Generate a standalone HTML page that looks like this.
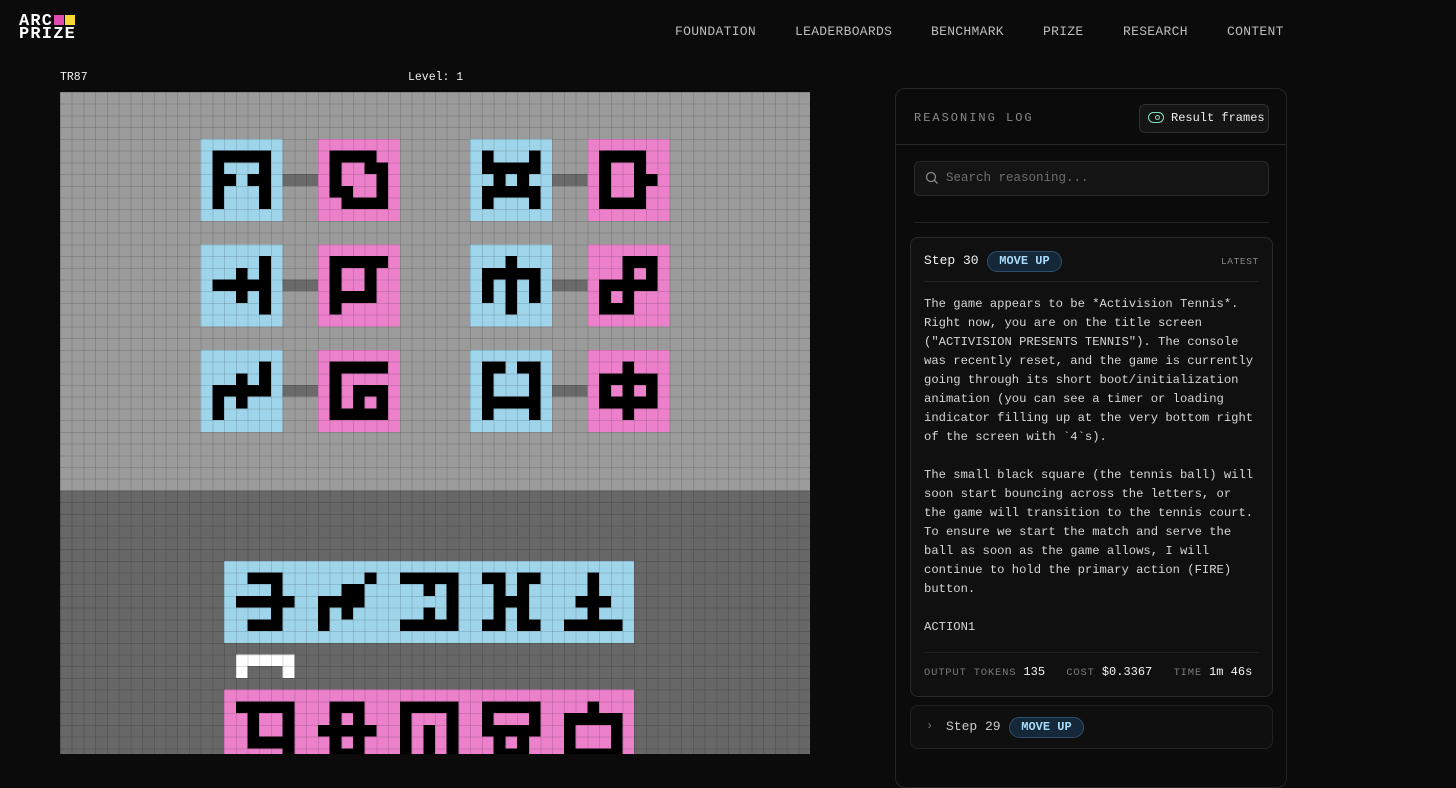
<!DOCTYPE html>
<html><head><meta charset="utf-8">
<style>
*{margin:0;padding:0;box-sizing:border-box}
body{width:1456px;height:754px;overflow:hidden;background:#0c0b0c;font-family:"Liberation Mono",monospace;color:#ddd;position:relative}
.abs{position:absolute}
.nav{top:24px;font-size:13px;color:#bdbdbd;letter-spacing:0.3px}
#board{left:60px;top:92px;width:750px;height:662px;overflow:hidden;background:#9b9b9b}
.panel{left:895px;top:88px;width:392px;height:700px;border:1px solid #262626;border-radius:10px;background:#0b0b0b}
.t{font-size:12.2px;line-height:19px;color:#d6d6d6;white-space:pre}
.badge{background:#15283a;border:1px solid #2e4f6c;border-radius:11px;color:#a8dcf8;font-weight:bold;font-size:12px;text-align:center}
</style></head><body>
<div class="abs" style="left:19px;top:15px;font-size:17px;font-weight:bold;color:#fff;line-height:13px;letter-spacing:1.2px;font-family:'Liberation Mono',monospace">ARC<span style="display:inline-block;width:10px;height:10px;background:#e04bb0;margin-left:1px"></span><span style="display:inline-block;width:10px;height:10px;background:#f7d63a;margin-left:1px"></span><br>PRIZE</div>
<div class="abs nav" style="left:675px">FOUNDATION</div>
<div class="abs nav" style="left:795px">LEADERBOARDS</div>
<div class="abs nav" style="left:931px">BENCHMARK</div>
<div class="abs nav" style="left:1043px">PRIZE</div>
<div class="abs nav" style="left:1123px">RESEARCH</div>
<div class="abs nav" style="left:1227px">CONTENT</div>
<div class="abs" style="left:60px;top:71px;font-size:11.5px;color:#eee">TR87</div>
<div class="abs" style="left:408px;top:71px;font-size:11.5px;color:#eee">Level: 1</div>
<div class="abs" id="board"></div>

<div class="abs panel"></div>
<div class="abs" style="left:914px;top:111px;font-size:12px;letter-spacing:2px;color:#8a8a8a">REASONING LOG</div>
<div class="abs" style="left:1139px;top:104px;width:130px;height:29px;border:1px solid #2e2e2e;border-radius:6px;background:#151515"></div>
<div class="abs" style="left:1148px;top:112px;width:16px;height:11px;border:1.5px solid #7fe0b8;border-radius:6px"><div style="position:absolute;left:6px;top:2px;width:5px;height:5px;border:1.2px solid #7fe0b8;border-radius:50%"></div></div>
<div class="abs" style="left:1171px;top:111px;font-size:12px;color:#eee">Result frames</div>
<div class="abs" style="left:895px;top:144px;width:392px;height:1px;background:#262626"></div>
<div class="abs" style="left:914px;top:161px;width:355px;height:35px;border:1px solid #2a2a2a;border-radius:6px;background:#141414"></div>
<svg class="abs" style="left:925px;top:171px" width="14" height="14" viewBox="0 0 14 14"><circle cx="6" cy="6" r="4.5" fill="none" stroke="#888" stroke-width="1.3"/><line x1="9.3" y1="9.3" x2="12.5" y2="12.5" stroke="#888" stroke-width="1.3"/></svg>
<div class="abs" style="left:946px;top:171px;font-size:12.5px;color:#6e6e6e">Search reasoning...</div>
<div class="abs" style="left:914px;top:222px;width:355px;height:1px;background:#222"></div>

<div class="abs" style="left:910px;top:237px;width:363px;height:460px;border:1px solid #2a2a2a;border-radius:8px;background:#101010"></div>
<div class="abs" style="left:924px;top:253px;font-size:13px;color:#f2f2f2">Step 30</div>
<div class="abs badge" style="left:987px;top:251px;width:75px;height:21px;line-height:19px">MOVE UP</div>
<div class="abs" style="left:1221px;top:256px;font-size:9.5px;letter-spacing:0.6px;color:#888">LATEST</div>
<div class="abs" style="left:924px;top:281px;width:335px;height:1px;background:#222"></div>
<div class="abs t" style="left:924px;top:295px">The game appears to be *Activision Tennis*.
Right now, you are on the title screen
("ACTIVISION PRESENTS TENNIS"). The console
was recently reset, and the game is currently
going through its short boot/initialization
animation (you can see a timer or loading
indicator filling up at the very bottom right
of the screen with `4`s).

The small black square (the tennis ball) will
soon start bouncing across the letters, or
the game will transition to the tennis court.
To ensure we start the match and serve the
ball as soon as the game allows, I will
continue to hold the primary action (FIRE)
button.

ACTION1</div>
<div class="abs" style="left:924px;top:652px;width:335px;height:1px;background:#1f1f1f"></div>
<div class="abs" style="left:924px;top:665px;font-size:10.5px;letter-spacing:0.8px;color:#7a7a7a;white-space:pre">OUTPUT TOKENS <span style="color:#f2f2f2;font-size:12px;letter-spacing:0">135</span>   COST <span style="color:#f2f2f2;font-size:12px;letter-spacing:0">$0.3367</span>   TIME <span style="color:#f2f2f2;font-size:12px;letter-spacing:0">1m 46s</span></div>

<div class="abs" style="left:910px;top:705px;width:363px;height:44px;border:1px solid #222;border-radius:8px;background:#0f0f0f"></div>
<div class="abs" style="left:926px;top:719px;font-size:12px;color:#777">›</div>
<div class="abs" style="left:946px;top:719px;font-size:13px;color:#ccc">Step 29</div>
<div class="abs badge" style="left:1009px;top:717px;width:75px;height:21px;line-height:19px">MOVE UP</div>

<script>
(function(){
var C=750/64,N=64,R=57;
var g=[];for(var r=0;r<R;r++){g[r]=[];for(var c=0;c<N;c++)g[r][c]=r<34?'#9b9b9b':'#676767';}
function rect(r0,c0,h,w,col){for(var r=r0;r<r0+h;r++)for(var c=c0;c<c0+w;c++)if(r<R)g[r][c]=col;}
function glyph(r0,c0,p){for(var i=0;i<5;i++)for(var j=0;j<5;j++)if(p[i][j]=='X'&&r0+i<R)g[r0+i][c0+j]='#000';}
var B='#9fd5ea',P='#ec80cb',K='#6a6a6a';
function pair(r,cb,cp,gb,gp){rect(r,cb,7,7,B);rect(r,cp,7,7,P);rect(r+3,cb+7,1,cp-cb-7,K);glyph(r+1,cb+1,gb);glyph(r+1,cp+1,gp);}
pair(4,12,22,["XXXXX","X...X","XX.XX","X...X","X...X"],["XXXX.","X..XX","X...X","XX..X",".XXXX"]);
pair(4,35,45,["X...X","XXXXX",".X.X.","XXXXX","X...X"],["XXXX.","X..X.","X..XX","X..X.","XXXX."]);
pair(13,12,22,["....X","..X.X","XXXXX","..X.X","....X"],["XXXXX","X..X.","X..X.","XXXX.","X...."]);
pair(13,35,45,["..X..","XXXXX","X.X.X","X.X.X","..X.."],["..XXX","..X.X","XXXXX","X.X..","XXX.."]);
pair(22,12,22,["....X","..X.X","XXXXX","X.X..","X...."],["XXXXX","X....","X.XXX","X.X.X","XXXXX"]);
pair(22,35,45,["XX.XX","X...X","X...X","XXXXX","X...X"],["..X..","XXXXX","X.X.X","XXXXX","..X.."]);
rect(40,14,7,35,B);
var bg=[[".XXX.","...X.","XXXXX","...X.",".XXX."],["....X","..XX.","XXXX.","X.X..","X...."],["XXXXX","..X.X","....X","..X.X","XXXXX"],["XX.XX",".X.X.",".XXX.",".X.X.","XX.XX"],["..X..","..X..",".XXX.","..X..","XXXXX"]];
for(var k=0;k<5;k++)glyph(41,15+7*k,bg[k]);
rect(48,15,1,5,'#fff');g[49][15]='#fff';g[49][19]='#fff';
rect(51,14,6,35,P);
var pg=[["XXXXX",".X..X",".X..X",".XXXX","....X"],[".XXX.",".X.X.","XXXXX",".X.X.",".XXX."],["XXXXX","X...X","X.X.X","X.X.X","X.X.X"],["XXXXX","X...X","XXXXX",".X.X.",".XXX."],["..X..","XXXXX","X...X","X...X","XXXXX"]];
for(var k=0;k<5;k++)glyph(52,15+7*k,pg[k]);
var s='<svg width="750" height="662" xmlns="http://www.w3.org/2000/svg" shape-rendering="crispEdges">';
for(var r=0;r<R;r++)for(var c=0;c<N;c++){s+='<rect x="'+(c*C).toFixed(2)+'" y="'+(r*C).toFixed(2)+'" width="'+(C+0.3).toFixed(2)+'" height="'+(C+0.3).toFixed(2)+'" fill="'+g[r][c]+'"/>';}
for(var c=0;c<=N;c++)s+='<rect x="'+(c*C).toFixed(2)+'" y="0" width="1" height="662" fill="rgba(0,0,0,0.13)"/>';
for(var r=0;r<=R;r++)s+='<rect x="0" y="'+(r*C).toFixed(2)+'" width="750" height="1" fill="rgba(0,0,0,0.13)"/>';
s+='</svg>';
document.getElementById('board').innerHTML=s;
})();
</script>
</body></html>
